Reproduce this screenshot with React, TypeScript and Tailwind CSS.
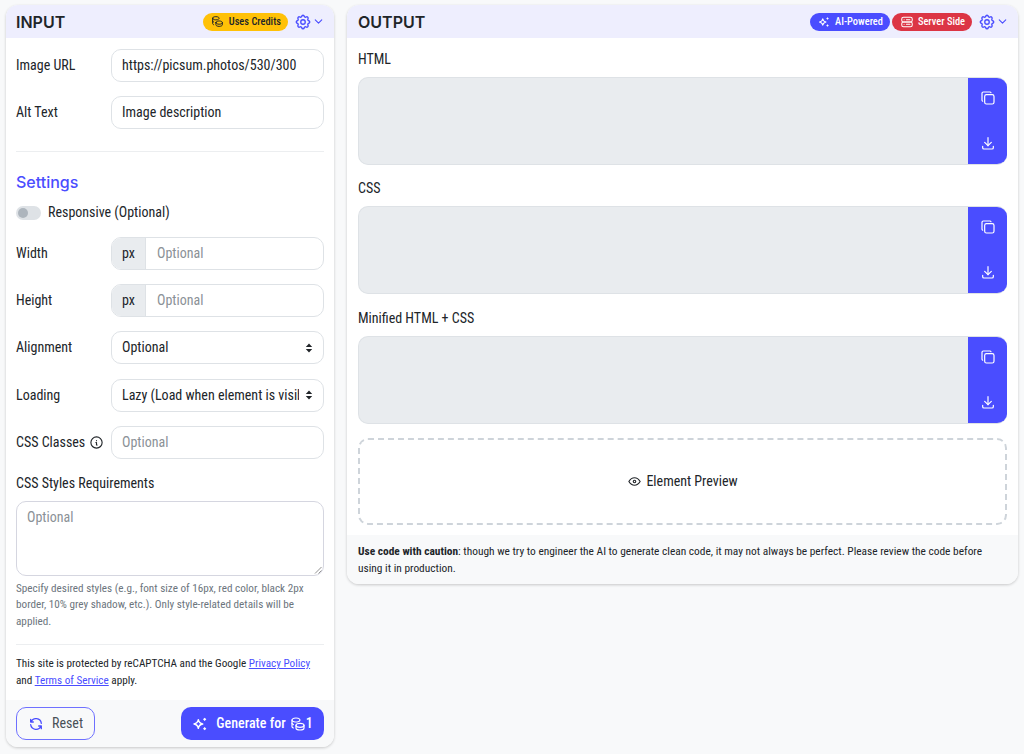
import React from "react";
import { TbSettings, TbChevronDown, TbInfoCircle, TbRefresh, TbCopy, TbDownload, TbEye, TbCoins, TbServer2 } from "react-icons/tb";

const Spark = ({ size }: { size: number }) => (
  <svg width={size} height={size} viewBox="0 0 24 24" fill="none" className="shrink-0">
    <path d="M9.5 5.5C10.3 9.8 11.7 11.2 16 12C11.7 12.8 10.3 14.2 9.5 18.5C8.7 14.2 7.3 12.8 3 12C7.3 11.2 8.7 9.8 9.5 5.5Z" stroke="currentColor" strokeWidth="2.2" strokeLinejoin="round" />
    <path d="M19 2.5 21.5 5 19 7.5 16.5 5Z M19 16.5 21.5 19 19 21.5 16.5 19Z" fill="currentColor" />
  </svg>
);

const Gear = () => (
  <div className="flex items-center text-[#4a4dff]">
    <TbSettings size={18} strokeWidth={1.8} />
    <TbChevronDown size={13} strokeWidth={2} />
  </div>
);

const SelectArrows = () => (
  <svg width="8" height="10" viewBox="0 0 8 10" className="shrink-0">
    <path d="M4 0.5 7.2 4H0.8Z M4 9.5 0.8 6H7.2Z" fill="#212529" />
  </svg>
);

const Row = ({ label, children }: { label: React.ReactNode; children: React.ReactNode }) => (
  <div className="flex items-center h-[33px]">
    <div className="w-[95px] shrink-0 text-[14px] whitespace-nowrap text-[#212529]">{label}</div>
    <div className="flex-1 min-w-0">{children}</div>
  </div>
);

const Field = ({ children, muted }: { children: React.ReactNode; muted?: boolean }) => (
  <div className={`h-[33px] rounded-[10px] border border-[#dee2e6] bg-white px-[10px] flex items-center text-[14px] ${muted ? "text-[#8b9197]" : "text-[#212529]"}`}>
    {children}
  </div>
);

const Px = () => (
  <div className="h-[33px] rounded-[10px] border border-[#dee2e6] bg-white flex items-center text-[14px] overflow-hidden">
    <div className="w-[34px] h-full bg-[#e9ecef] border-r border-[#dee2e6] flex items-center justify-center text-[#212529]">px</div>
    <div className="pl-[11px] text-[#8b9197]">Optional</div>
  </div>
);

const Sel = ({ children }: { children: React.ReactNode }) => (
  <div className="h-[33px] rounded-[10px] border border-[#dee2e6] bg-white pl-[10px] pr-[10px] flex items-center text-[14px] text-[#212529] gap-[6px]">
    <div className="flex-1 min-w-0 overflow-hidden whitespace-nowrap">{children}</div>
    <SelectArrows />
  </div>
);

const CodeBox = ({ label }: { label: string }) => (
  <div>
    <div className="text-[14px] leading-[21px] text-[#212529] pt-[1px] mb-[7px]">{label}</div>
    <div className="flex h-[88px] rounded-[10px] overflow-hidden bg-[#e9ecef] border-t border-b border-l border-[#dee2e6]">
      <div className="flex-1" />
      <div className="w-[39px] bg-[#4a4dff] text-white flex flex-col items-center justify-between pt-[13px] pb-[14px] -my-px">
        <TbCopy size={16} strokeWidth={1.8} />
        <TbDownload size={16} strokeWidth={1.8} />
      </div>
    </div>
  </div>
);

export default function App() {
  return (
    <div className="min-h-[754px] bg-[#f8f9fa] px-[6px] pt-[5px] flex items-start gap-[13px] font-['Roboto',sans-serif] [font-stretch:87.5%] text-[#212529]">
      <div className="w-[328px] shrink-0 rounded-[12px] bg-white shadow-[0_1px_3px_rgba(0,0,0,0.2)] overflow-hidden h-[742px] flex flex-col">
        <div className="h-[33px] bg-[#eeeefe] flex items-center justify-between pl-[10px] pr-[9px]">
          <div className="font-['Inter',sans-serif] font-semibold text-[16px] text-[#212529]">INPUT</div>
          <div className="flex items-center gap-[6px]">
            <div className="h-[18px] rounded-full bg-[#ffc107] flex items-center gap-[5px] pl-[8px] pr-[7px] text-[10.4px] font-medium text-[#212529]">
              <TbCoins size={13} strokeWidth={1.8} />
              Uses Credits
            </div>
            <Gear />
          </div>
        </div>
        <div className="flex-1 px-[10px] pt-[11px] flex flex-col">
          <div className="flex flex-col gap-[14px]">
            <Row label="Image URL"><Field>https://picsum.photos/530/300</Field></Row>
            <Row label="Alt Text"><Field>Image description</Field></Row>
          </div>
          <div className="h-px bg-[#eceef0] mt-[22px]" />
          <div className="font-['Inter',sans-serif] font-medium text-[16px] leading-[24px] text-[#4a4dff] mt-[18px]">Settings</div>
          <div className="flex items-center gap-[7px] mt-[8px] h-[21px] text-[14px]">
            <div className="w-[25px] h-[14px] rounded-full bg-[#dee2e6] flex items-center pl-[2px]">
              <div className="w-[10px] h-[10px] rounded-full bg-[#adb5bd]" />
            </div>
            Responsive (Optional)
          </div>
          <div className="flex flex-col gap-[14.2px] mt-[14px]">
            <Row label="Width"><Px /></Row>
            <Row label="Height"><Px /></Row>
            <Row label="Alignment"><Sel>Optional</Sel></Row>
            <Row label="Loading"><Sel>Lazy (Load when element is visible)</Sel></Row>
            <Row label={<span className="flex items-center gap-[4px]">CSS Classes <TbInfoCircle size={15} strokeWidth={1.8} /></span>}><Field muted>Optional</Field></Row>
          </div>
          <div className="text-[14px] leading-[21px] mt-[14px]">CSS Styles Requirements</div>
          <div className="relative h-[75px] mt-[7px] rounded-[10px] border border-[#d5d6e0] px-[10px] py-[5px] text-[14px] text-[#8b9197]">
            Optional
            <svg width="8" height="8" viewBox="0 0 8 8" className="absolute right-[1px] bottom-[1px]">
              <path d="M7.5 1 1 7.5M7.5 4.5 4.5 7.5" stroke="#777" strokeWidth="0.8" />
            </svg>
          </div>
          <div className="text-[11.2px] leading-[16.5px] text-[#6c757d] mt-[5px]">
            Specify desired styles (e.g., font size of 16px, red color, black 2px border, 10% grey shadow, etc.). Only style-related details will be applied.
          </div>
          <div className="h-px bg-[#eceef0] mt-[14px]" />
          <div className="text-[11.2px] leading-[16.8px] text-[#212529] mt-[11px]">
            This site is protected by reCAPTCHA and the Google <a href="#" className="underline text-[#4a4dff]">Privacy Policy</a> and <a href="#" className="underline text-[#4a4dff]">Terms of Service</a> apply.
          </div>
        </div>
        <div className="h-[47px] bg-[#f8f9fa] flex items-center justify-between px-[10px]">
          <div className="h-[33px] w-[79px] rounded-[10px] border border-[#6e70ff] flex items-center justify-center gap-[8px] text-[14px] text-[#495057]">
            <TbRefresh size={16} strokeWidth={1.9} className="text-[#4a4dff]" />
            Reset
          </div>
          <div className="h-[33px] w-[143px] rounded-[10px] bg-[#4a4dff] text-white flex items-center justify-center gap-[8px] text-[14px] font-medium">
            <Spark size={16} />
            <span className="flex items-center">Generate for <TbCoins size={16} strokeWidth={1.8} className="ml-[4px]" />1</span>
          </div>
        </div>
      </div>

      <div className="flex-1 rounded-[12px] bg-white shadow-[0_1px_3px_rgba(0,0,0,0.2)] overflow-hidden">
        <div className="h-[33px] bg-[#eeeefe] flex items-center justify-between pl-[11px] pr-[9px]">
          <div className="font-['Inter',sans-serif] font-semibold text-[16px] text-[#212529]">OUTPUT</div>
          <div className="flex items-center">
            <div className="h-[18px] rounded-full bg-[#4a4dff] flex items-center gap-[5px] pl-[8px] pr-[7px] text-[10.4px] font-medium text-white">
              <Spark size={12} />
              AI-Powered
            </div>
            <div className="h-[18px] rounded-full bg-[#dc3545] flex items-center gap-[4px] pl-[8px] pr-[7px] ml-[2px] mr-[6px] text-[10.4px] font-medium text-white">
              <TbServer2 size={14} strokeWidth={1.8} />
              Server Side
            </div>
            <Gear />
          </div>
        </div>
        <div className="px-[11px] pt-[10px] pb-[10px] flex flex-col gap-[12.4px]">
          <CodeBox label="HTML" />
          <CodeBox label="CSS" />
          <CodeBox label="Minified HTML + CSS" />
          <div className="h-[87.5px] rounded-[10px] border-2 border-dashed border-[#ced4da] mt-[1.6px] flex items-center justify-center gap-[4px] text-[14px]">
            <TbEye size={15} strokeWidth={1.8} />
            Element Preview
          </div>
        </div>
        <div className="bg-[#f8f9fa] pl-[11px] pr-[30px] pt-[8px] pb-[7px] text-[11.4px] leading-[17px] text-[#212529]">
          <b className="font-bold">Use code with caution</b>: though we try to engineer the AI to generate clean code, it may not always be perfect. Please review the code before using it in production.
        </div>
      </div>
    </div>
  );
}
